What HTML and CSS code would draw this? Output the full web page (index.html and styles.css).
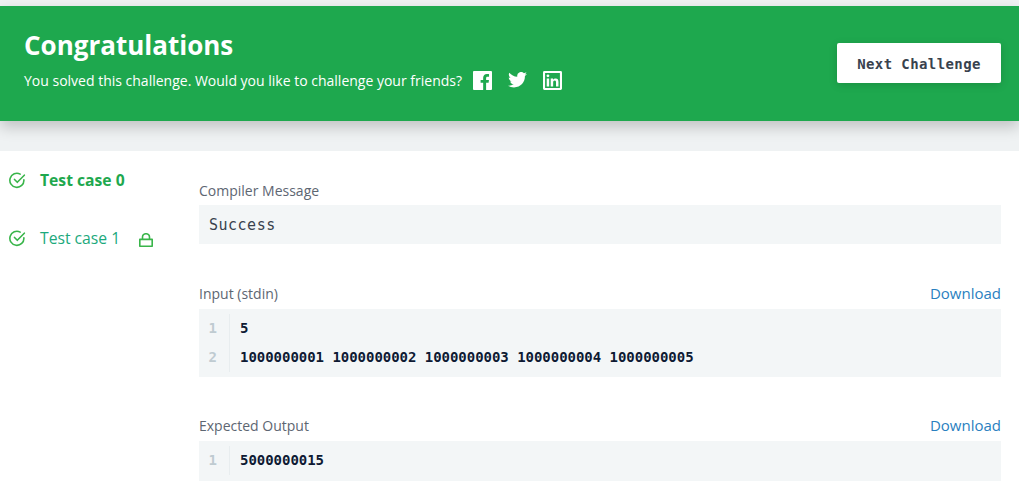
FILE: index.html
```html
<!DOCTYPE html>
<html lang="en">
<head>
<meta charset="utf-8">
<title>Congratulations</title>
<link rel="stylesheet" href="styles.css">
</head>
<body>
<div class="top">
  <header class="banner">
    <div class="banner-text">
      <h1>Congratulations</h1>
      <div class="share">
        <span>You solved this challenge. Would you like to challenge your friends?</span>
        <svg class="ico fb" viewBox="0 0 20 20"><path fill="#fff" d="M1 0h18a1 1 0 0 1 1 1v18a1 1 0 0 1-1 1h-5.200v-7.600h2.600l.4-3h-3V7.500c0-.9.3-1.500 1.500-1.500h1.600V3.300c-.3 0-1.200-.1-2.300-.1-2.300 0-3.900 1.400-3.900 4v2.200H8v3h2.700V20H1a1 1 0 0 1-1-1V1a1 1 0 0 1 1-1z"/></svg>
        <svg class="ico tw" viewBox="0 0 20 16.300"><path fill="#fff" d="M20 1.900c-.7.3-1.500.6-2.400.7.9-.5 1.500-1.300 1.800-2.300-.8.5-1.700.8-2.600 1A4.100 4.100 0 0 0 9.800 5C6.400 4.800 3.400 3.200 1.400.7.300 2.600.9 5 2.700 6.200c-.7 0-1.300-.2-1.900-.5 0 2 1.400 3.700 3.300 4.100-.6.2-1.200.2-1.900.1.500 1.600 2 2.800 3.800 2.800A8.200 8.200 0 0 1 0 14.400a11.600 11.600 0 0 0 6.300 1.900c7.500 0 11.800-6.400 11.500-12 .9-.6 1.600-1.400 2.200-2.400z"/></svg>
        <svg class="ico in" viewBox="0 0 20 20"><path fill="#fff" fill-rule="evenodd" d="M1.500 0h17A1.500 1.500 0 0 1 20 1.500v17a1.500 1.500 0 0 1-1.500 1.500h-17A1.500 1.500 0 0 1 0 18.500v-17A1.500 1.500 0 0 1 1.500 0zM2.200 2.200v15.600h15.600V2.200zM3.900 8h2.600v8.200H3.900zM5.200 3.600a1.500 1.500 0 1 1 0 3 1.500 1.500 0 0 1 0-3zM8.100 8h2.500v1.200c.4-.7 1.300-1.400 2.600-1.400 2.600 0 3.100 1.700 3.100 3.900v4.500h-2.600v-4c0-1 0-2.200-1.300-2.200s-1.700 1-1.700 2.100v4.100H8.100z"/></svg>
      </div>
    </div>
    <button class="next" type="button">Next Challenge</button>
  </header>
</div>
<main class="content">
  <aside class="cases">
    <div class="case active">
      <svg class="check" viewBox="0 0 16 16"><path fill="none" stroke="#39b54a" stroke-width="1.500" stroke-linecap="round" stroke-linejoin="round" d="M14 7.400A6.600 6.600 0 1 1 10.500 2M5.200 7l2.600 2.700L14.400 3"/></svg>
      <span>Test case 0</span>
    </div>
    <div class="case">
      <svg class="check" viewBox="0 0 16 16"><path fill="none" stroke="#39b54a" stroke-width="1.500" stroke-linecap="round" stroke-linejoin="round" d="M14 7.400A6.600 6.600 0 1 1 10.500 2M5.200 7l2.600 2.700L14.400 3"/></svg>
      <span>Test case 1</span>
      <svg class="lock" viewBox="0 0 14 14"><path fill="none" stroke="#39b54a" stroke-width="1.600" stroke-linejoin="round" d="M.8 6.400h12.400v6.800H.8zM3.500 6.400V4a3.500 3.300 0 0 1 7 0v2.400"/></svg>
    </div>
  </aside>
  <section class="results">
    <div class="block msg-block">
      <div class="label"><span>Compiler Message</span></div>
      <div class="message">Success</div>
    </div>
    <div class="block">
      <div class="label wide"><span>Input (stdin)</span><a href="#">Download</a></div>
      <div class="code">
        <div class="row"><span class="num">1</span><span class="val">5</span></div>
        <div class="row"><span class="num">2</span><span class="val">1000000001 1000000002 1000000003 1000000004 1000000005</span></div>
      </div>
    </div>
    <div class="block">
      <div class="label wide"><span>Expected Output</span><a href="#">Download</a></div>
      <div class="code single">
        <div class="row"><span class="num">1</span><span class="val">5000000015</span></div>
      </div>
    </div>
  </section>
</main>
</body>
</html>
```
FILE: styles.css
```css
html, body { margin: 0; padding: 0; height: 498px; overflow: hidden; background: #fff; font-family: "Open Sans", sans-serif; }
.top { background: #eff2f3; padding: 6px 0 30px; }
.banner { height: 115px; box-sizing: border-box; background: #1ea84e; box-shadow: 0 6px 14px rgba(0,0,0,.2); display: flex; justify-content: space-between; align-items: flex-start; padding: 0 18px 0 24px; color: #fff; }
.banner-text { padding-top: 22px; }
h1 { margin: 0; font-size: 26px; line-height: 34px; font-weight: 700; }
.share { display: flex; align-items: center; margin-top: 7px; font-size: 14px; line-height: 24px; }
.ico { display: block; width: 19px; height: 19px; margin-bottom: 2px; }
.fb { margin-left: 11px; }
.tw { margin-left: 16px; height: 15.500px; }
.in { margin-left: 16px; }
.next { margin-top: 37px; width: 164px; height: 40px; border: 0; border-radius: 2px; background: #fff; color: #39424e; font: 700 14px/40px "DejaVu Sans Mono", monospace; letter-spacing: .4px; box-shadow: 0 2px 8px rgba(0,0,0,.15); padding: 1px 0 0; }
.content { display: flex; padding-right: 18px; }
.cases { width: 199px; flex: none; padding-top: 18px; box-sizing: border-box; }
.case { display: flex; align-items: center; height: 22px; margin-bottom: 36px; font-size: 15.700px; color: #1ba94c; }
.case.active { font-weight: 700; }
.case span { color: #1ba97c; }
.case.active span { color: #1ea84e; }
.check { width: 17px; height: 17px; margin-left: 9px; margin-right: 14px; }
.lock { width: 14px; height: 14px; margin-left: 19px; margin-top: 4px; }
.results { flex: 1; min-width: 0; padding-top: 30px; }
.block { margin-bottom: 39px; }
.msg-block { margin-bottom: 40px; }
.label { display: flex; justify-content: space-between; align-items: center; height: 18px; margin-bottom: 6px; font-size: 14px; color: #5d6672; }
.label.wide { margin-bottom: 7px; }
.label a { color: #2a7fbf; text-decoration: none; font-size: 15px; }
.message { height: 39px; background: #f3f6f7; padding: 1px 0 0 10px; box-sizing: border-box; font: 15px/39px "DejaVu Sans Mono", monospace; letter-spacing: .5px; color: #39424e; }
.code { background: #f3f6f7; padding: 5px 0; font: 700 14px/29px "DejaVu Sans Mono", monospace; letter-spacing: -.03px; color: #0e1a33; }
.code.single { padding-bottom: 6px; }
.row { display: flex; }
.num { width: 31px; flex: none; box-sizing: border-box; padding-right: 12px; text-align: right; color: #bfcbd1; border-right: 1px solid #e8edef; }
.val { padding-left: 10px; }
```
